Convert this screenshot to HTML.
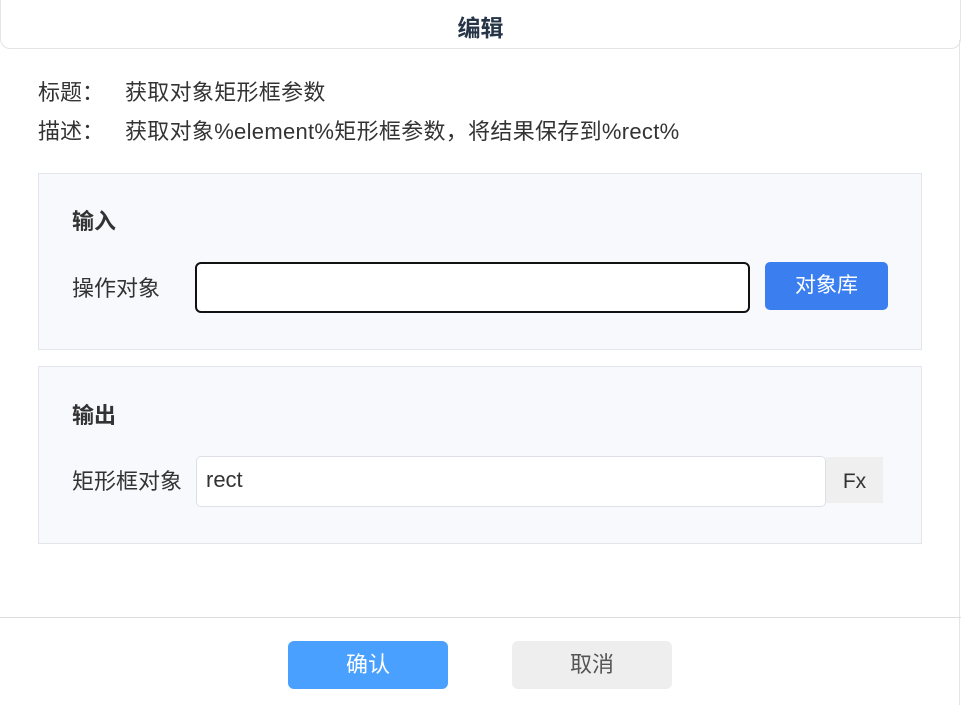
<!DOCTYPE html>
<html><head><meta charset="utf-8"><style>
*{box-sizing:border-box;margin:0;padding:0}
body{width:961px;height:705px;background:#fff;font-family:"Liberation Sans","Noto Sans CJK SC",sans-serif;position:relative;overflow:hidden;color:#333}
.a{position:absolute}
.hdr{left:0;top:0;width:961px;height:49px;border:1px solid #e2e4e8;border-top:none;border-radius:0 0 10px 10px}
.t{left:0;width:961px;top:9px;text-align:center;font-size:23px;font-weight:bold;color:#253447}
.lbl{font-size:22px;color:#333;line-height:26px;white-space:nowrap}
.sp{letter-spacing:0.3px}
.box{left:38px;width:884px;background:#f8f9fd;border:1px solid #e2e5ea}
.h{font-size:22px;font-weight:bold;color:#333;line-height:26px}
</style></head><body>
<div class="a hdr"></div>
<div class="a t">编辑</div>
<div class="a" style="left:959px;top:40px;width:1px;height:665px;background:#e2e4e8"></div>
<div class="a lbl" style="left:38px;top:80px">标题：</div>
<div class="a lbl sp" style="left:125px;top:80px">获取对象矩形框参数</div>
<div class="a lbl" style="left:38px;top:119px">描述：</div>
<div class="a lbl sp" style="left:125px;top:119px">获取对象%element%矩形框参数，将结果保存到%rect%</div>

<div class="a box" style="top:173px;height:177px"></div>
<div class="a h" style="left:72px;top:209px">输入</div>
<div class="a lbl" style="left:72px;top:276px">操作对象</div>
<div class="a" style="left:195px;top:262px;width:555px;height:51px;border:2px solid #111;border-radius:6px;background:#fff"></div>
<div class="a" style="left:765px;top:262px;width:123px;height:48px;background:#3a7ef0;border-radius:5px;color:#fff;font-size:21px;text-align:center;line-height:48px">对象库</div>

<div class="a box" style="top:366px;height:178px"></div>
<div class="a h" style="left:72px;top:403px">输出</div>
<div class="a lbl" style="left:72px;top:469px">矩形框对象</div>
<div class="a" style="left:196px;top:456px;width:630px;height:51px;border:1px solid #dcdfe6;border-radius:5px;background:#fff"></div>
<div class="a lbl" style="left:206px;top:467px">rect</div>
<div class="a" style="left:826px;top:457px;width:57px;height:46px;background:#efefef;font-size:21px;line-height:50px;text-align:center;color:#333">Fx</div>

<div class="a" style="left:0;top:617px;width:961px;height:1px;background:#dcdcdc"></div>
<div class="a" style="left:288px;top:641px;width:160px;height:48px;background:#4aa0ff;border-radius:6px;color:#fff;font-size:22px;text-align:center;line-height:48px">确认</div>
<div class="a" style="left:512px;top:641px;width:160px;height:48px;background:#eeeeee;border-radius:6px;color:#555;font-size:22px;text-align:center;line-height:48px">取消</div>
</body></html>
